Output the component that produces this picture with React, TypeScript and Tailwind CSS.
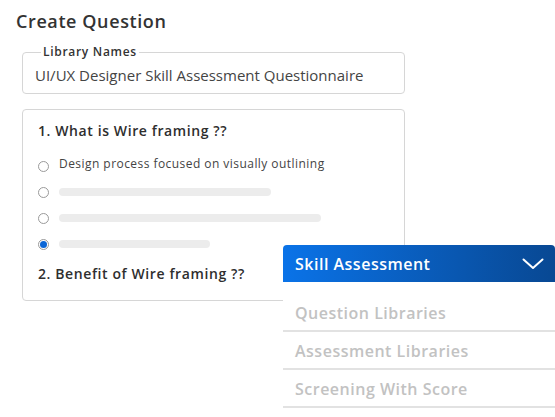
import React from 'react';

const font = { fontFamily: '"Open Sans", "Liberation Sans", sans-serif' };

const Radio: React.FC<{ checked?: boolean }> = ({ checked }) => (
  <span className="w-[11px] h-[11px] shrink-0 rounded-full border border-[#9a9a9a] bg-white flex items-center justify-center">
    {checked && <span className="w-[7px] h-[7px] rounded-full bg-[#0b66d6]" />}
  </span>
);

const App: React.FC = () => {
  const bars = ['w-[212px]', 'w-[262px]', 'w-[151px]'];

  return (
    <div className="relative w-[555px] h-[417px] overflow-hidden bg-white" style={font}>
      <div className="pl-[16px] pt-[9px]">
        <h1 className="text-[18px] leading-[24px] font-semibold tracking-[0.6px] text-[#333333]">Create Question</h1>

        <fieldset className="mt-[13px] ml-[6px] w-[383px] border border-[#d6d6d6] rounded-[4px] px-[12px] pt-[7px] pb-[8px]">
          <legend className="ml-[6px] px-[2px] text-[12px] leading-[12px] font-semibold tracking-[0.7px] text-[#333333]">Library Names</legend>
          <div className="text-[15px] leading-[20px] text-[#444444]">UI/UX Designer Skill Assessment Questionnaire</div>
        </fieldset>

        <div className="mt-[15px] ml-[6px] w-[383px] h-[192px] border border-[#d6d6d6] rounded-[4px] px-[15px] pt-[11px]">
          <div className="text-[14px] leading-[20px] font-semibold tracking-[0.6px] text-[#2e2e2e]">1. What is Wire framing ??</div>
          <div className="mt-[12px]">
            <div className="h-[26px] flex items-center gap-[10px]">
              <Radio />
              <span className="mb-[5px] text-[12px] leading-[16px] tracking-[0.45px] text-[#444444]">Design process focused on visually outlining</span>
            </div>
            {bars.map((w, i) => (
              <div key={w} className="h-[26px] flex items-center gap-[10px]">
                <Radio checked={i === 2} />
                <span className={`${w} h-[8px] rounded-full bg-[#ececec]`} />
              </div>
            ))}
          </div>
          <div className="mt-[7px] text-[14px] leading-[20px] font-semibold tracking-[0.6px] text-[#2e2e2e]">2. Benefit of Wire framing ??</div>
        </div>
      </div>

      <div className="absolute left-[283px] top-[245px] w-[272px] bottom-0 bg-white">
        <div className="h-[37px] rounded-t-[4px] bg-gradient-to-r from-[#0a73e8] to-[#084893] flex items-center justify-between pl-[12px] pr-[11px]">
          <span className="text-[16px] font-semibold tracking-[0.5px] text-white">Skill Assessment</span>
          <svg width="22" height="12" viewBox="0 0 22 12" fill="none">
            <path d="M1.5 1.5 L11 10 L20.5 1.5" stroke="white" strokeWidth="2" strokeLinecap="round" strokeLinejoin="round" />
          </svg>
        </div>
        <div className="pt-[12px]">
          {['Question Libraries', 'Assessment Libraries', 'Screening With Score'].map((t) => (
            <div key={t} className="border-b-2 border-[#e2e2e2] pl-[12px] pt-[9px] pb-[7px] text-[16px] leading-[20px] font-semibold tracking-[0.5px] text-[#c2c2c2]">
              {t}
            </div>
          ))}
        </div>
      </div>
    </div>
  );
};

export default App;
